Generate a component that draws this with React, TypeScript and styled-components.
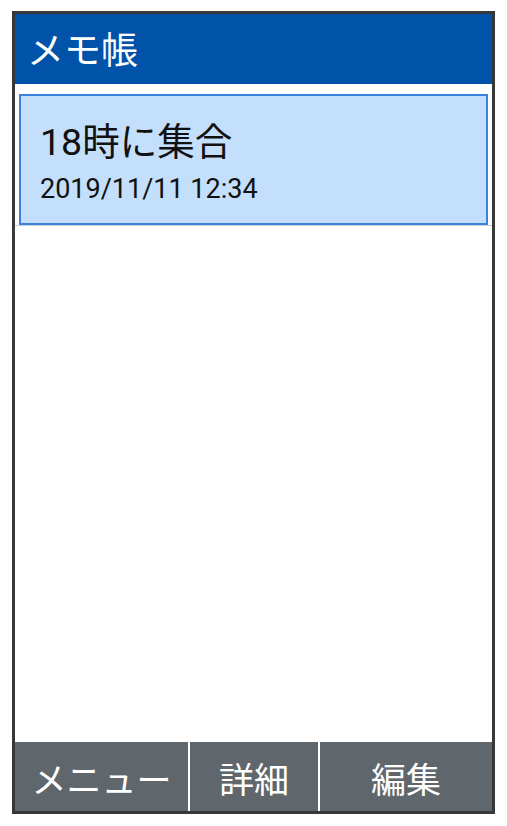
import React from "react";
import styled, { createGlobalStyle } from "styled-components";

const GlobalStyle = createGlobalStyle`
  html, body {
    margin: 0;
    padding: 0;
    background: #ffffff;
  }
  body {
    font-family: Roboto, "Noto Sans CJK JP", sans-serif;
  }
`;

interface Memo {
  title: string;
  date: string;
}

const memos: Memo[] = [{ title: "18時に集合", date: "2019/11/11 12:34" }];

const softKeys = [
  { label: "メニュー", width: 173 },
  { label: "詳細", width: 128 },
  { label: "編集", width: 0 }
];

const App: React.FC = () => {
  return (
    <>
      <GlobalStyle />
      <Page>
        <Phone>
          <Header>
            <Title>メモ帳</Title>
          </Header>
          <MemoList>
            {memos.map((memo, i) => (
              <MemoRow key={i}>
                <MemoCard $selected={i === 0}>
                  <MemoTitle>{memo.title}</MemoTitle>
                  <MemoDate>{memo.date}</MemoDate>
                </MemoCard>
              </MemoRow>
            ))}
          </MemoList>
          <SoftKeyBar>
            {softKeys.map((key) => (
              <SoftKey key={key.label} $width={key.width}>
                {key.label}
              </SoftKey>
            ))}
          </SoftKeyBar>
        </Phone>
      </Page>
    </>
  );
};

const Page = styled.div`
  width: 507px;
  height: 826px;
  padding: 11px 0 0 12px;
  box-sizing: border-box;
`;

const Phone = styled.div`
  width: 483px;
  height: 803px;
  box-sizing: border-box;
  border: 3px solid #383838;
  display: flex;
  flex-direction: column;
  background: #ffffff;
`;

const Header = styled.div`
  height: 70px;
  background-color: #0053a8;
  display: flex;
  align-items: center;
  padding-left: 12px;
  flex-shrink: 0;
`;

const Title = styled.div`
  color: #ffffff;
  font-family: "Noto Sans CJK JP", sans-serif;
  font-size: 37px;
  line-height: 1;
  margin-top: -2px;
`;

const MemoList = styled.div`
  flex: 1;
  padding-top: 10px;
`;

const MemoRow = styled.div`
  padding: 0 4px 0 4px;
  border-bottom: 1px solid #c4d4d4;
`;

const MemoCard = styled.div<{ $selected: boolean }>`
  height: 131px;
  box-sizing: border-box;
  background-color: ${({ $selected }) => ($selected ? "#c4dffc" : "#ffffff")};
  border: 2px solid ${({ $selected }) => ($selected ? "#3b82dd" : "transparent")};
  padding: 24px 0 0 19px;
  display: flex;
  flex-direction: column;
`;

const MemoTitle = styled.div`
  color: #111111;
  font-size: 37.5px;
  line-height: 44px;
`;

const MemoDate = styled.div`
  color: #111111;
  font-size: 27px;
  line-height: 32px;
  margin-top: 9px;
`;

const SoftKeyBar = styled.div`
  height: 69px;
  display: flex;
  background-color: #ffffff;
  gap: 2px;
  flex-shrink: 0;
`;

const SoftKey = styled.div<{ $width: number }>`
  ${({ $width }) => ($width ? `width: ${$width}px;` : "flex: 1;")}
  background-color: #5f676d;
  color: #ffffff;
  font-family: "Noto Sans CJK JP", sans-serif;
  font-size: 35px;
  display: flex;
  align-items: center;
  justify-content: center;
  padding-top: 2px;
  box-sizing: border-box;
`;

export default App;
